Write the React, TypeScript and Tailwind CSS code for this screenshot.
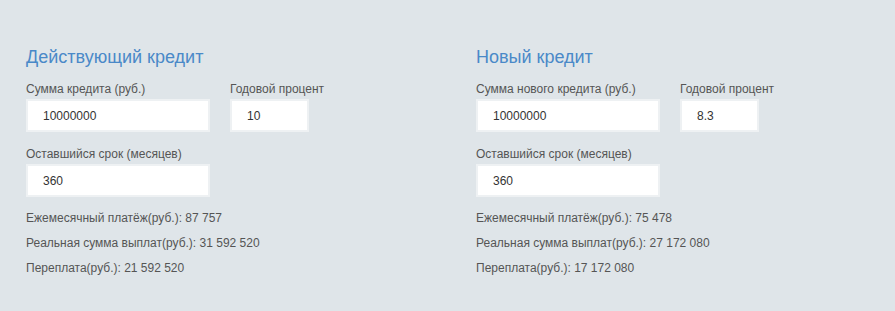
import React from "react";

type Col = {
  title: string;
  sumLabel: string;
  sum: string;
  rate: string;
  term: string;
  monthly: string;
  total: string;
  over: string;
};

const cols: Col[] = [
  {
    title: "Действующий кредит",
    sumLabel: "Сумма кредита (руб.)",
    sum: "10000000",
    rate: "10",
    term: "360",
    monthly: "87 757",
    total: "31 592 520",
    over: "21 592 520",
  },
  {
    title: "Новый кредит",
    sumLabel: "Сумма нового кредита (руб.)",
    sum: "10000000",
    rate: "8.3",
    term: "360",
    monthly: "75 478",
    total: "27 172 080",
    over: "17 172 080",
  },
];

function Field({ value, w }: { value: string; w: string }) {
  return (
    <div
      className={`${w} h-[33px] border-2 border-[#eef1f3] bg-white pl-[15px] flex items-center text-[12px] text-[#333] leading-[14px]`}
    >
      {value}
    </div>
  );
}

function Column({ c }: { c: Col }) {
  return (
    <div className="w-[450px] shrink-0 flex flex-col">
      <h2 className="text-[18px] leading-[20px] text-[#4a89c8] font-normal">{c.title}</h2>
      <div className="flex gap-[20px] mt-[15px]">
        <div className="flex flex-col">
          <label className="text-[12px] leading-[14px] text-[#555] mb-[3px]">{c.sumLabel}</label>
          <Field value={c.sum} w="w-[184px]" />
        </div>
        <div className="flex flex-col">
          <label className="text-[12px] leading-[14px] text-[#555] mb-[3px]">Годовой процент</label>
          <Field value={c.rate} w="w-[79px]" />
        </div>
      </div>
      <div className="flex flex-col mt-[15px]">
        <label className="text-[12px] leading-[14px] text-[#555] mb-[3px]">Оставшийся срок (месяцев)</label>
        <Field value={c.term} w="w-[184px]" />
      </div>
      <div className="flex flex-col gap-[11px] mt-[14px] text-[12px] leading-[14px] text-[#555]">
        <p>Ежемесячный платёж(руб.): {c.monthly}</p>
        <p>Реальная сумма выплат(руб.): {c.total}</p>
        <p>Переплата(руб.): {c.over}</p>
      </div>
    </div>
  );
}

export default function App() {
  return (
    <div
      className="w-[895px] h-[311px] bg-[#dfe5e9] pt-[47px] pl-[26px] flex overflow-hidden"
      style={{ fontFamily: '"Liberation Sans", Arial, sans-serif' }}
    >
      {cols.map((c) => (
        <Column key={c.title} c={c} />
      ))}
    </div>
  );
}
